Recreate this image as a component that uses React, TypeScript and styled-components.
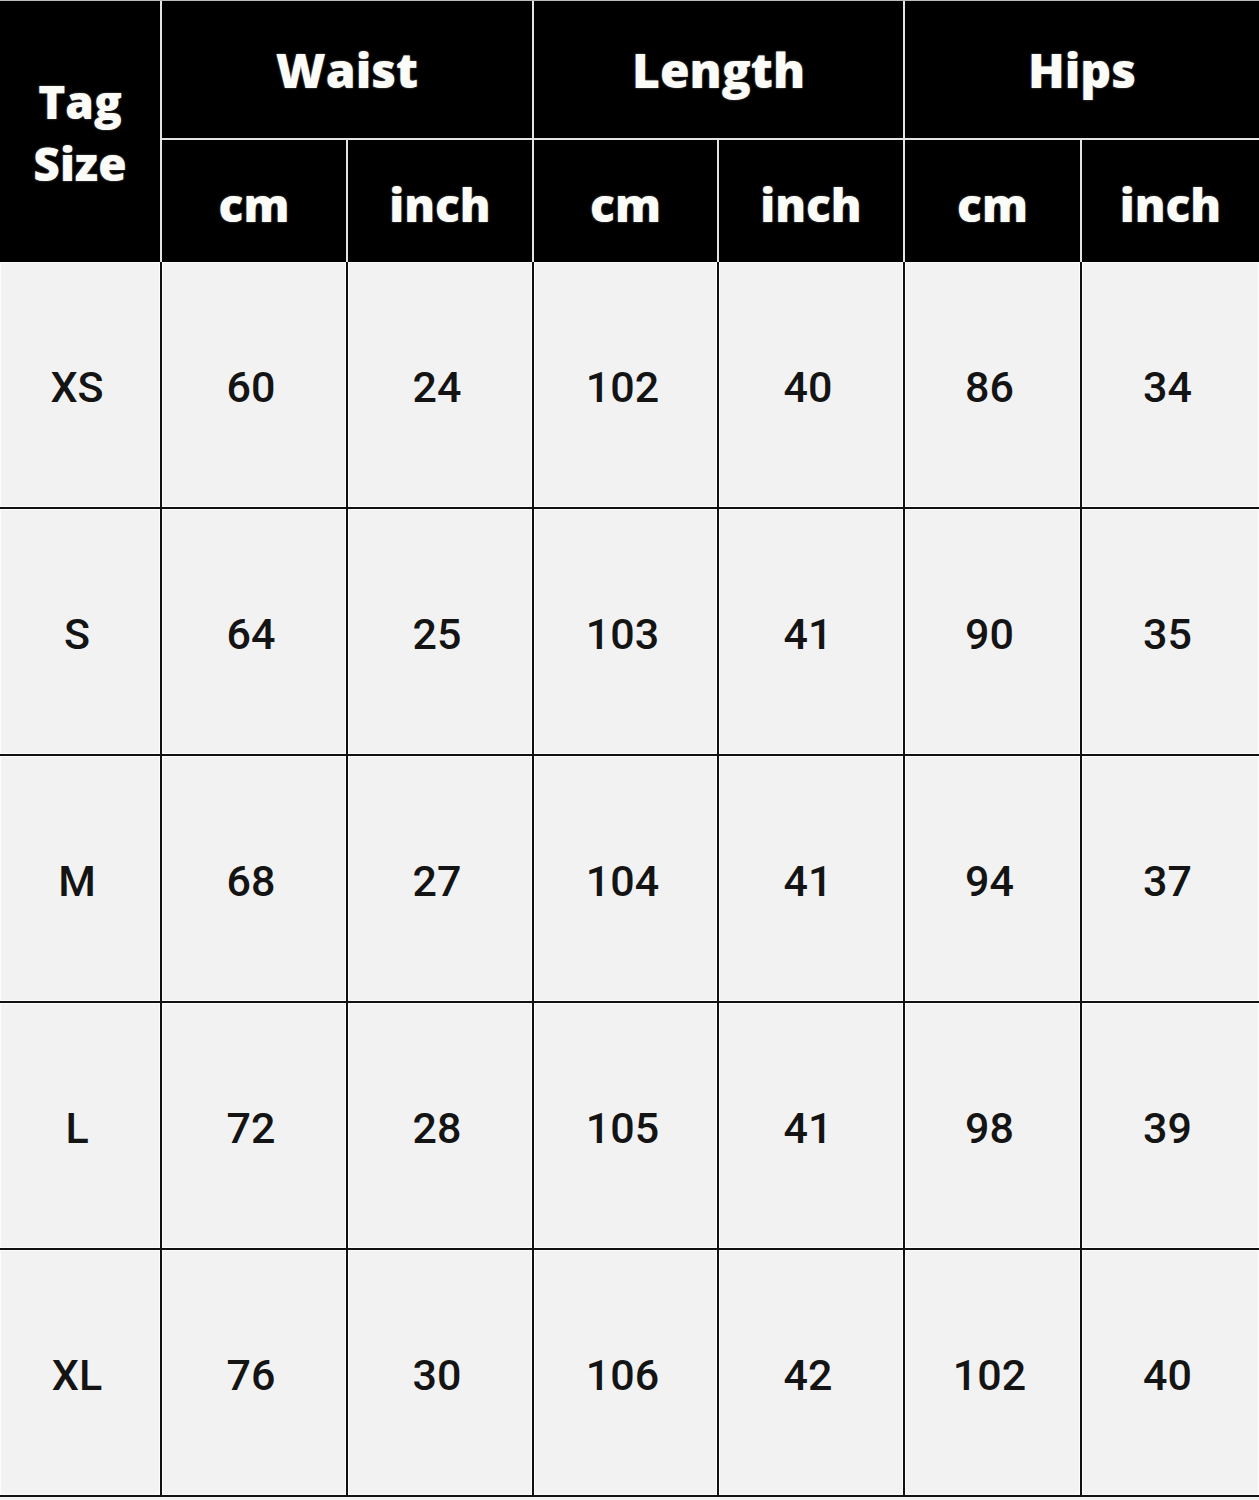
import styled, { createGlobalStyle } from 'styled-components';

const GlobalStyle = createGlobalStyle`
  html, body {
    margin: 0;
    padding: 0;
    background: #f2f2f2;
  }
`;

const columns = '160px 184px 184px 183px 184px 175px 177px';

const Chart = styled.div`
  width: 1259px;
  height: 1500px;
  overflow: hidden;
  background: #f2f2f2;
`;

const HeaderGrid = styled.div`
  display: grid;
  grid-template-columns: ${columns};
  grid-template-rows: 137px 122px;
  gap: 2px;
  background: #e4e4e4;
  border-top: 1px solid #bdbdbd;
`;

const HeadCell = styled.div<{ $span?: number; $rows?: number }>`
  grid-column: span ${(p) => p.$span ?? 1};
  grid-row: span ${(p) => p.$rows ?? 1};
  background: #000;
  color: #fbfbf7;
  display: flex;
  flex-direction: column;
  align-items: center;
  justify-content: center;
  font-family: 'Open Sans', 'Noto Sans', sans-serif;
  font-weight: 800;
  font-size: ${(p) => (p.$rows === 2 ? 46 : 48)}px;
  line-height: 62px;
  text-shadow: 0 0 2px rgba(255, 255, 255, 0.45);
`;

const UnitCell = styled(HeadCell)`
  padding-top: 6px;
  font-size: 46px;
`;

const BodyGrid = styled.div`
  display: grid;
  grid-template-columns: ${columns};
  grid-auto-rows: 245px;
  gap: 2px;
  background: #111;
  padding-bottom: 2px;
`;

const Cell = styled.div`
  background: #f2f2f2;
  box-shadow: inset 0 0 0 1px #fcfcfc;
  display: flex;
  align-items: center;
  justify-content: center;
  font-family: Roboto, 'Liberation Sans', sans-serif;
  font-weight: 500;
  font-size: 43px;
  color: #141414;
  padding: 4px 6px 0 0;
  box-sizing: border-box;
`;

const groups = ['Waist', 'Length', 'Hips'];

const rows: string[][] = [
  ['XS', '60', '24', '102', '40', '86', '34'],
  ['S', '64', '25', '103', '41', '90', '35'],
  ['M', '68', '27', '104', '41', '94', '37'],
  ['L', '72', '28', '105', '41', '98', '39'],
  ['XL', '76', '30', '106', '42', '102', '40'],
];

const App = () => {
  return (
    <Chart>
      <GlobalStyle />
      <HeaderGrid>
        <HeadCell $rows={2}>
          <span>Tag</span>
          <span>Size</span>
        </HeadCell>
        {groups.map((g) => (
          <HeadCell key={g} $span={2}>
            {g}
          </HeadCell>
        ))}
        {groups.map((g) => [
          <UnitCell key={`${g}-cm`}>cm</UnitCell>,
          <UnitCell key={`${g}-inch`}>inch</UnitCell>,
        ])}
      </HeaderGrid>
      <BodyGrid>
        {rows.map((row, i) =>
          row.map((value, j) => <Cell key={`${i}-${j}`}>{value}</Cell>)
        )}
      </BodyGrid>
    </Chart>
  );
};

export default App;
